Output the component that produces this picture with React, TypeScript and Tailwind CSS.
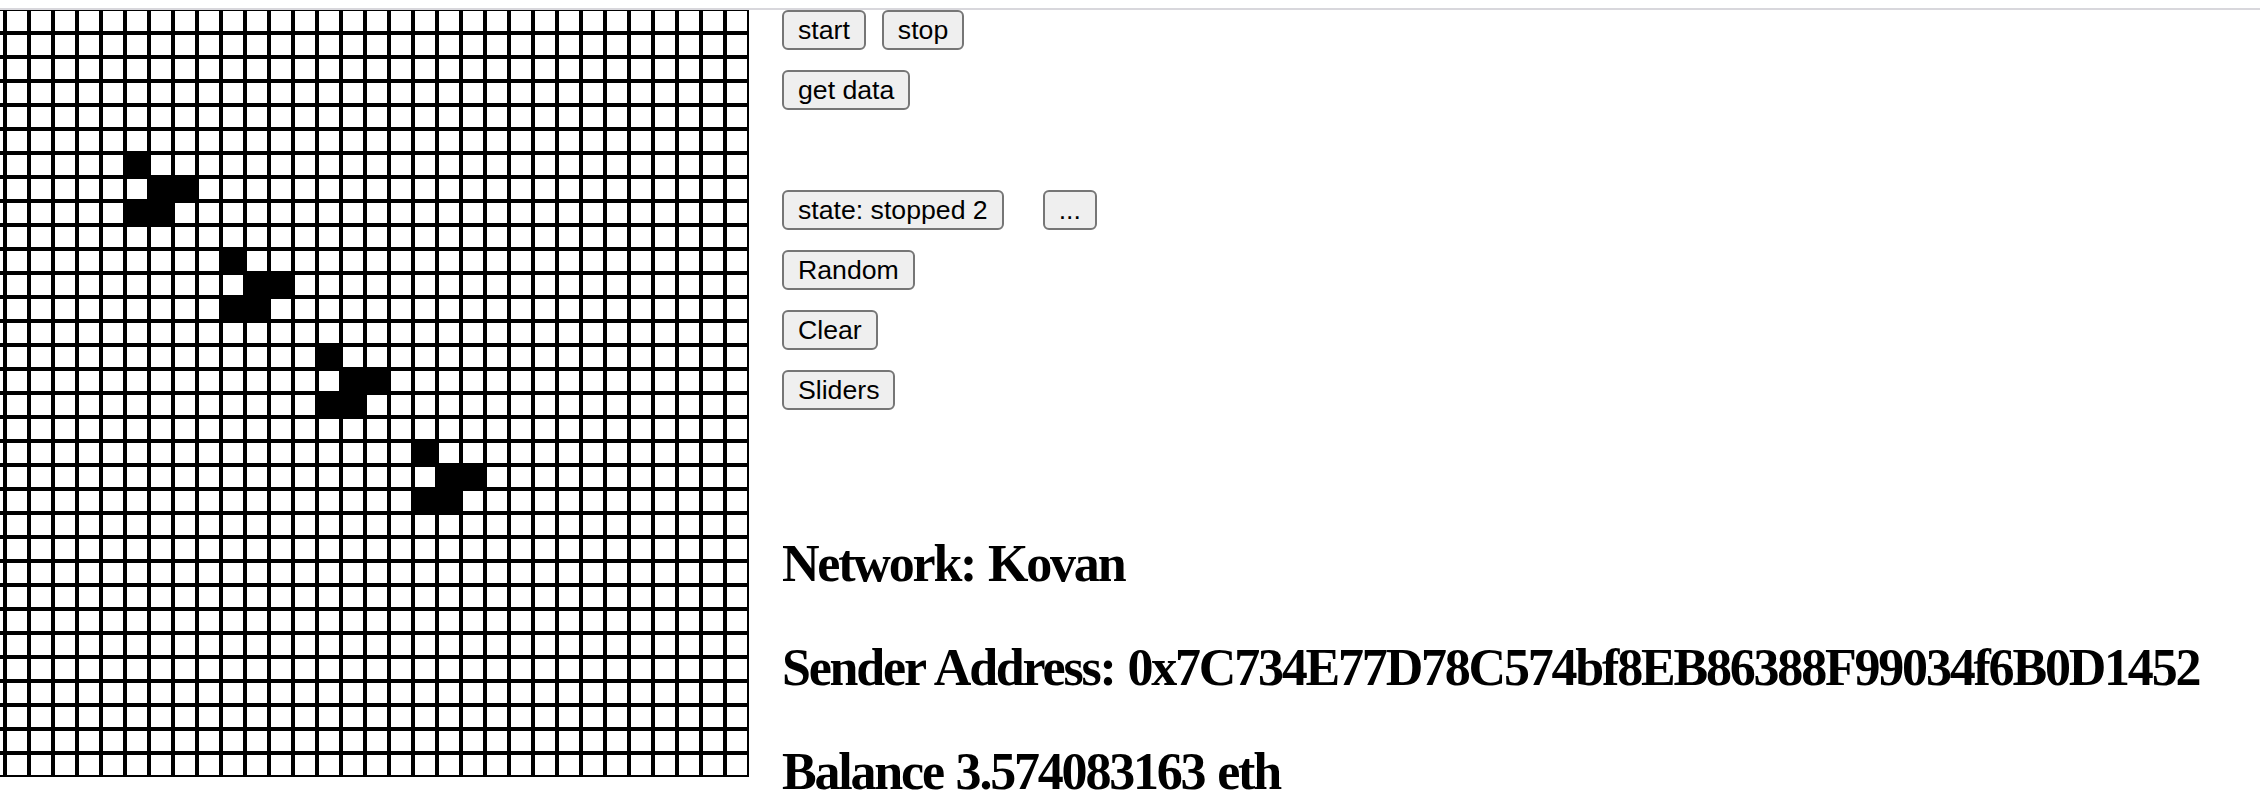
const SIZE = 32;

// glider positions on the board, one every 4 cells down the diagonal
const alive = new Set<string>();
[6, 10, 14, 18].forEach((b) => {
  alive.add(`${b}-${b}`);
  alive.add(`${b + 1}-${b + 1}`);
  alive.add(`${b + 1}-${b + 2}`);
  alive.add(`${b + 2}-${b}`);
  alive.add(`${b + 2}-${b + 1}`);
});

function Cell({ on }: { on: boolean }) {
  return <div className={on ? "w-6 h-6 border-2 border-black bg-black" : "w-6 h-6 border-2 border-black bg-white"} />;
}

function Board() {
  const cells = [];
  for (let r = 0; r < SIZE; r++) {
    for (let c = 0; c < SIZE; c++) {
      cells.push(<Cell key={`${r}-${c}`} on={alive.has(`${r}-${c}`)} />);
    }
  }
  return (
    <div className="w-[749px] h-[767px] overflow-hidden shrink-0">
      <div className="-ml-[19px] -mt-[1px] grid grid-cols-[repeat(32,24px)] w-[768px]">{cells}</div>
    </div>
  );
}

function Btn({ title }: { title: string }) {
  return (
    <button className="px-[14px] py-[3px] leading-[30px] text-[26.67px] border-2 border-[#767676] bg-[#efefef] rounded-[6px] text-black whitespace-nowrap">
      {title}
    </button>
  );
}

export default function App() {
  return (
    <div className="min-h-screen bg-white text-black font-['Liberation_Sans',Arial,sans-serif]">
      <div className="h-[8px]" />
      <div className="h-[2px] bg-[#d8d7dc]" />
      <div className="flex items-start">
        <Board />

        <div className="ml-[33px]">
          <div className="flex flex-col items-start gap-[20px]">
            <div className="flex gap-[16px]">
              <Btn title="start" />
              <Btn title="stop" />
            </div>
            <Btn title="get data" />
            <div className="h-[40px]" />
            <div className="flex gap-[39px]">
              <Btn title="state: stopped 2" />
              <Btn title="..." />
            </div>
            <Btn title="Random" />
            <Btn title="Clear" />
            <Btn title="Sliders" />
          </div>

          <div className="mt-[124px] flex flex-col gap-[44px] font-['Liberation_Serif','Times_New_Roman',serif] font-bold text-[52px] leading-[60px] tracking-[-2.2px] [word-spacing:2px] whitespace-nowrap">
            <h2>Network: Kovan</h2>
            <h2>Sender Address: 0x7C734E77D78C574bf8EB86388F99034f6B0D1452</h2>
            <h2>Balance 3.574083163 eth</h2>
          </div>
        </div>
      </div>
    </div>
  );
}
